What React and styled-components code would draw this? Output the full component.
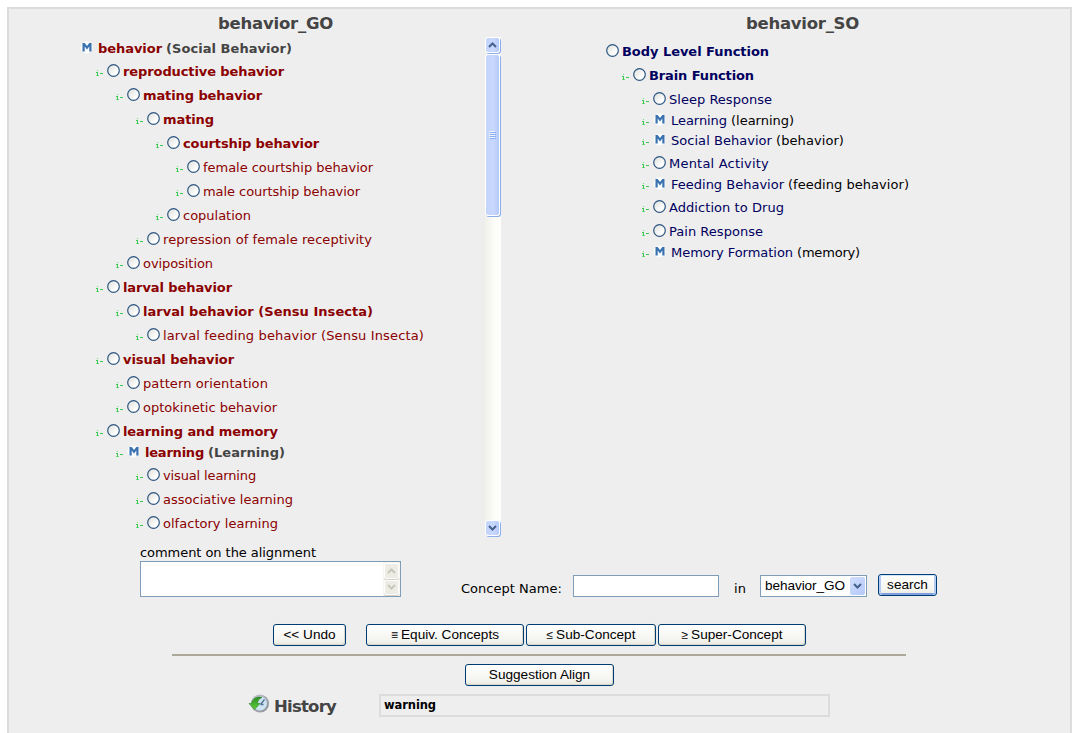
import React, { useLayoutEffect, useRef, useState } from "react";
import styled, { createGlobalStyle, css } from "styled-components";

const GlobalStyle = createGlobalStyle`
  * { box-sizing: border-box; }
  html, body { margin: 0; background: #fff; overflow: hidden; }
  body { font-family: Verdana, "DejaVu Sans", sans-serif; font-size: 13px; color: #000; height: 733px; }
`;

const Panel = styled.main`
  width: 1065px;
  height: 760px;
  margin: 7px 0 0 7px;
  border: 2px solid #dcdcdc;
  background: #eee;
`;

const Columns = styled.section`
  display: flex;
  height: 528px;
`;

const Column = styled.div`
  width: ${(p) => p.$width}px;
`;

const Title = styled.h2`
  display: flex;
  height: 28px;
  margin: 0;
  padding: 1px 0 0 ${(p) => p.$indent}px;
  align-items: center;
  font-size: 16.5px;
  line-height: 28px;
  color: #444;
`;

const ScrollArea = styled.div`
  display: flex;
  height: 500px;
`;

const Tree = styled.ul`
  flex: 1;
  list-style: none;
  margin: 0;
  padding: 1px 0 0 ${(p) => p.$indent}px;
`;

const Row = styled.li`
  display: flex;
  align-items: flex-start;
  height: ${(p) => (p.$match ? 20 : 24)}px;
  padding-top: ${(p) => (p.$match ? 0 : 3)}px;
  padding-left: ${(p) => p.$indent}px;
`;

const Branch = styled.svg`
  flex: none;
  width: 7px;
  height: 7px;
  margin: 9px 4px 0 0;
`;

const RadioIcon = styled.svg`
  flex: none;
  width: 13px;
  height: 13px;
  margin: 3px 3px 0 0;
`;

const MatchIcon = styled.svg`
  flex: none;
  width: 13px;
  height: 13px;
  margin: 3px 5px 0 ${(p) => (p.$root ? -1 : 0)}px;
`;

const Text = styled.span`
  display: block;
  flex: none;
  width: ${(p) => p.$width}px;
  padding-top: ${(p) => (p.$flush ? 0 : 1)}px;
  line-height: ${(p) => (p.$flush ? 18 : 20)}px;
  white-space: nowrap;
  color: ${(p) => p.$color || "inherit"};
  font-weight: ${(p) => (p.$bold ? "bold" : "inherit")};
  margin-right: 4px;
`;

const Track = styled.div`
  display: flex;
  flex-direction: column;
  width: 16px;
  height: 499px;
  background: linear-gradient(90deg, #f1f0e9, #fdfdfa 60%, #fefefc);
`;

const xpBox = css`
  border: 1px solid #fff;
  border-radius: 3px;
  box-shadow: 1px 1px 0 #8daee8;
  background: linear-gradient(90deg, #c4d4fb, #c8d8fe 60%, #b4c8f6);
`;

const ArrowBox = styled.div`
  ${xpBox}
  display: flex;
  align-items: center;
  justify-content: center;
  flex: none;
  width: 15px;
  height: 16px;
`;

const Thumb = styled.div`
  ${xpBox}
  display: flex;
  align-items: center;
  justify-content: center;
  width: 15px;
  height: 162px;
  margin: 1px 0 auto;
`;

const Row1 = styled.section`
  display: flex;
  height: 87px;
  padding-left: 131px;
`;

const CommentBox = styled.div`
  width: 321px;
  padding-top: 5px;
`;

const TextArea = styled.div`
  display: flex;
  justify-content: flex-end;
  width: 261px;
  height: 36px;
  margin-top: -2px;
  border: 1px solid #7f9db9;
  background: #fff;
`;

const MiniScroll = styled.div`
  display: flex;
  flex-direction: column;
  gap: 1px;
  width: 17px;
  padding: 1px;
  background: #f6f6f1;
`;

const MiniArrow = styled.div`
  display: flex;
  flex: 1;
  align-items: center;
  justify-content: center;
  border: 1px solid #fff;
  border-radius: 2px;
  background: #eeede5;
  box-shadow: 0 1px 0 #d4d2c6;
`;

const SearchBar = styled.form`
  display: flex;
  align-items: flex-start;
  padding-top: 37px;
`;

const FieldLabel = styled.label`
  padding-top: 4px;
  padding-left: ${(p) => p.$pad || 0}px;
  width: ${(p) => p.$width}px;
`;

const Input = styled.input`
  width: 146px;
  height: 22px;
  margin: 1px 14px 0 0;
  padding: 1px 3px;
  border: 1px solid #7f9db9;
  background: #fff;
`;

const Select = styled.div`
  display: flex;
  align-items: center;
  justify-content: space-between;
  width: 107px;
  height: 22px;
  margin: 1px 11px 0 0;
  padding: 1px 1px 1px 4px;
  border: 1px solid #7f9db9;
  background: #fff;
  font: 13.6px "Liberation Sans", Arial, sans-serif;
`;

const SelectArrow = styled.span`
  display: flex;
  align-items: center;
  justify-content: center;
  width: 15px;
  height: 18px;
  border-radius: 2px;
  background: linear-gradient(135deg, #d0defd, #b5c9f8);
`;

const Button = styled.button`
  display: flex;
  align-items: center;
  justify-content: center;
  flex: none;
  width: ${(p) => p.$width}px;
  height: 22px;
  padding: 0 0 1px;
  margin-right: ${(p) => p.$gap || 0}px;
  border: 1px solid #003c74;
  border-radius: 3px;
  background: linear-gradient(#fff, #f4f4f0 75%, #e8e6dc);
  font: 13.6px "Liberation Sans", Arial, sans-serif;
  color: #000;
  box-shadow: ${(p) =>
    p.$focus
      ? "inset 0 1px 0 #cee7ff, inset 2px 0 0 #b5cdf5, inset -2px 0 0 #b5cdf5, inset 0 -2px 0 #7f9fe0"
      : "inset -1px -1px 0 #d9d7cb, 0 0 0 1px #e9edf0"};
`;

const Symbol = styled.span`
  margin-right: 3px;
  font-size: 12px;
`;

const Actions = styled.section`
  display: flex;
  padding-left: 264px;
`;

const Rule = styled.hr`
  width: 734px;
  height: 2px;
  margin: 8px 0 8px 163px;
  border: 0;
  background: #aca899;
`;

const SuggestRow = styled.section`
  display: flex;
  padding-left: 456px;
`;

const HistoryRow = styled.section`
  display: flex;
  padding: 8px 0 0 239px;
`;

const HistoryTitle = styled.h2`
  width: 109px;
  margin: 0;
  padding: 2px 0 0 4px;
  font-size: 16.5px;
  color: #444;
`;

const Warning = styled.div`
  width: 451px;
  height: 23px;
  padding: 0 0 0 3px;
  border: 2px solid #dcdcdc;
  font-size: 11.5px;
`;

/* Text set to a fixed measure by spreading its letters evenly. */
function Fit({ children, width, color, bold, flush }) {
  const ref = useRef(null);
  const [spacing, setSpacing] = useState(0);
  useLayoutEffect(() => {
    ref.current.style.letterSpacing = "0px";
    const natural = ref.current.getBoundingClientRect().width;
    const next = (width - natural) / children.length;
    ref.current.style.letterSpacing = `${next}px`;
    setSpacing(next);
  }, [children, width]);
  return (
    <Text $width={width} $color={color} $bold={bold} $flush={flush}>
      <span ref={ref} style={{ letterSpacing: spacing }}>{children}</span>
    </Text>
  );
}

const BranchMark = () => (
  <Branch viewBox="0 0 7 7" shapeRendering="crispEdges">
    <path d="M0 2h2v4h-1v-3h-1zM4 3h3v1h-3z" fill="#3cc84e" />
    <path d="M1 0h1v1h-1zM0 5h1v1h-1zM2 5h1v1h-1z" fill="#7cdc86" />
  </Branch>
);

const Radio = () => (
  <RadioIcon viewBox="0 0 13 13">
    <defs>
      <linearGradient id="dot" x1="0" y1="0" x2="1" y2="1">
        <stop offset="0" stopColor="#dcdcd7" />
        <stop offset="0.7" stopColor="#fff" />
      </linearGradient>
    </defs>
    <circle cx="6.5" cy="6.5" r="5.8" fill="url(#dot)" stroke="#2c5580" strokeWidth="1.2" />
  </RadioIcon>
);

const Match = ({ root }) => (
  <MatchIcon viewBox="0 0 13 13" $root={root}>
    <circle cx="6.5" cy="6.5" r="6" fill="#fafcfd" />
    <path d="M2.500 2h2.200l2.300 3 2.300-3h2.200v8.500h-2.200v-5l-2.300 3-2.300-3v5h-2.200z" fill="#3a72b0" />
  </MatchIcon>
);

const Chevron = ({ up, color = "#44608c", size = 9 }) => (
  <svg width={size} height={size * 0.67} viewBox="0 0 9 6">
    <path d={up ? "M1 5l3.5-3.5 3.5 3.5" : "M1 1l3.5 3.5 3.5-3.5"} fill="none" stroke={color} strokeWidth="2" />
  </svg>
);

const HistoryIcon = () => (
  <svg width="22" height="20" viewBox="0 0 22 20">
    <defs>
      <linearGradient id="rim" x1="0" y1="0" x2="1" y2="1">
        <stop offset="0" stopColor="#c3c6cc" />
        <stop offset="1" stopColor="#8d919b" />
      </linearGradient>
      <linearGradient id="leaf" x1="0" y1="0" x2="0" y2="1">
        <stop offset="0" stopColor="#2c8f22" />
        <stop offset="1" stopColor="#62cf3c" />
      </linearGradient>
    </defs>
    <circle cx="12" cy="9.500" r="8" fill="#cfe4f2" stroke="url(#rim)" strokeWidth="2.200" />
    <path d="M12.500 10.500l4-5M12.500 10.500h3" stroke="#4c7391" strokeWidth="1.300" fill="none" />
    <path d="M1 9.500h2.500C4 5 8.500 2 14 3.500 11 4.800 9.800 6.500 9.500 9.500h2.500l-5.500 6z" fill="url(#leaf)" stroke="#2a8a24" strokeWidth=".6" />
  </svg>
);

const GO = [
  [0, "behavior", 64, true, "(Social Behavior)", 126],
  [1, "reproductive behavior", 161, true],
  [2, "mating behavior", 119, true],
  [3, "mating", 51, true],
  [4, "courtship behavior", 136, true],
  [5, "female courtship behavior", 170],
  [5, "male courtship behavior", 157],
  [4, "copulation", 68],
  [3, "repression of female receptivity", 209],
  [2, "oviposition", 70],
  [1, "larval behavior", 109, true],
  [2, "larval behavior (Sensu Insecta)", 230, true],
  [3, "larval feeding behavior (Sensu Insecta)", 261],
  [1, "visual behavior", 111, true],
  [2, "pattern orientation", 125],
  [2, "optokinetic behavior", 134],
  [1, "learning and memory", 155, true],
  [2, "learning", 59, true, "(Learning)", 77],
  [3, "visual learning", 93],
  [3, "associative learning", 130],
  [3, "olfactory learning", 115],
];

const SO = [
  [0, "Body Level Function", 147, true],
  [1, "Brain Function", 105, true],
  [2, "Sleep Response", 103],
  [2, "Learning", 56, false, "(learning)", 63],
  [2, "Social Behavior", 101, false, "(behavior)", 68],
  [2, "Mental Activity", 100],
  [2, "Feeding Behavior", 113, false, "(feeding behavior)", 121],
  [2, "Addiction to Drug", 115],
  [2, "Pain Response", 94],
  [2, "Memory Formation", 122, false, "(memory)", 63],
];

function Nodes({ items, color, base }) {
  return items.map(([level, name, width, bold, match, matchWidth]) => (
    <Row key={name} $match={!!match} $indent={level ? base + (level - 1) * 20 : 0}>
      {level > 0 && <BranchMark />}
      {match ? <Match root={level === 0} /> : <Radio />}
      <Fit width={width} color={color} bold={bold}>{name}</Fit>
      {match && <Fit width={matchWidth} color={bold ? "#444" : "#000"} bold={bold}>{match}</Fit>}
    </Row>
  ));
}

export default function App() {
  return (
    <>
      <GlobalStyle />
      <Panel>
        <Columns>
          <Column $width={492}>
            <Title $indent={209}><Fit width={115}>behavior_GO</Fit></Title>
            <ScrollArea>
              <Tree $indent={72}><Nodes items={GO} color="#8b0000" base={15} /></Tree>
              <Track>
                <ArrowBox><Chevron up /></ArrowBox>
                <Thumb>
                  <svg width="7" height="8" viewBox="0 0 7 8" shapeRendering="crispEdges">
                    <path d="M0 0h6v1H0zM0 2h6v1H0zM0 4h6v1H0zM0 6h6v1H0z" fill="#eef4fe" />
                    <path d="M1 1h6v1H1zM1 3h6v1H1zM1 5h6v1H1zM1 7h6v1H1z" fill="#8cb0f8" />
                  </svg>
                </Thumb>
                <ArrowBox><Chevron /></ArrowBox>
              </Track>
            </ScrollArea>
          </Column>
          <Column $width={569}>
            <Title $indent={245}><Fit width={113}>behavior_SO</Fit></Title>
            <Tree $indent={105}><Nodes items={SO} color="#00005f" base={16} /></Tree>
          </Column>
        </Columns>
        <Row1>
          <CommentBox>
            <Fit width={176}>comment on the alignment</Fit>
            <TextArea>
              <MiniScroll>
                <MiniArrow><Chevron up color="#c9c7ba" /></MiniArrow>
                <MiniArrow><Chevron color="#c9c7ba" /></MiniArrow>
              </MiniScroll>
            </TextArea>
          </CommentBox>
          <SearchBar>
            <FieldLabel $width={112}><Fit width={101}>Concept Name:</Fit></FieldLabel>
            <Input />
            <FieldLabel $width={27} $pad={1}><Fit width={12}>in</Fit></FieldLabel>
            <Select>
              <Fit width={80} flush>behavior_GO</Fit>
              <SelectArrow><Chevron /></SelectArrow>
            </Select>
            <Button type="button" $width={59} $focus>search</Button>
          </SearchBar>
        </Row1>
        <Actions>
          <Button $width={73} $gap={20}>&lt;&lt; Undo</Button>
          <Button $width={158} $gap={2}><Symbol>≡</Symbol>Equiv. Concepts</Button>
          <Button $width={130} $gap={2}><Symbol>≤</Symbol>Sub-Concept</Button>
          <Button $width={148}><Symbol>≥</Symbol>Super-Concept</Button>
        </Actions>
        <Rule />
        <SuggestRow><Button $width={149}>Suggestion Align</Button></SuggestRow>
        <HistoryRow>
          <HistoryIcon />
          <HistoryTitle><Fit width={62}>History</Fit></HistoryTitle>
          <Warning><Fit width={52} bold flush>warning</Fit></Warning>
        </HistoryRow>
      </Panel>
    </>
  );
}
